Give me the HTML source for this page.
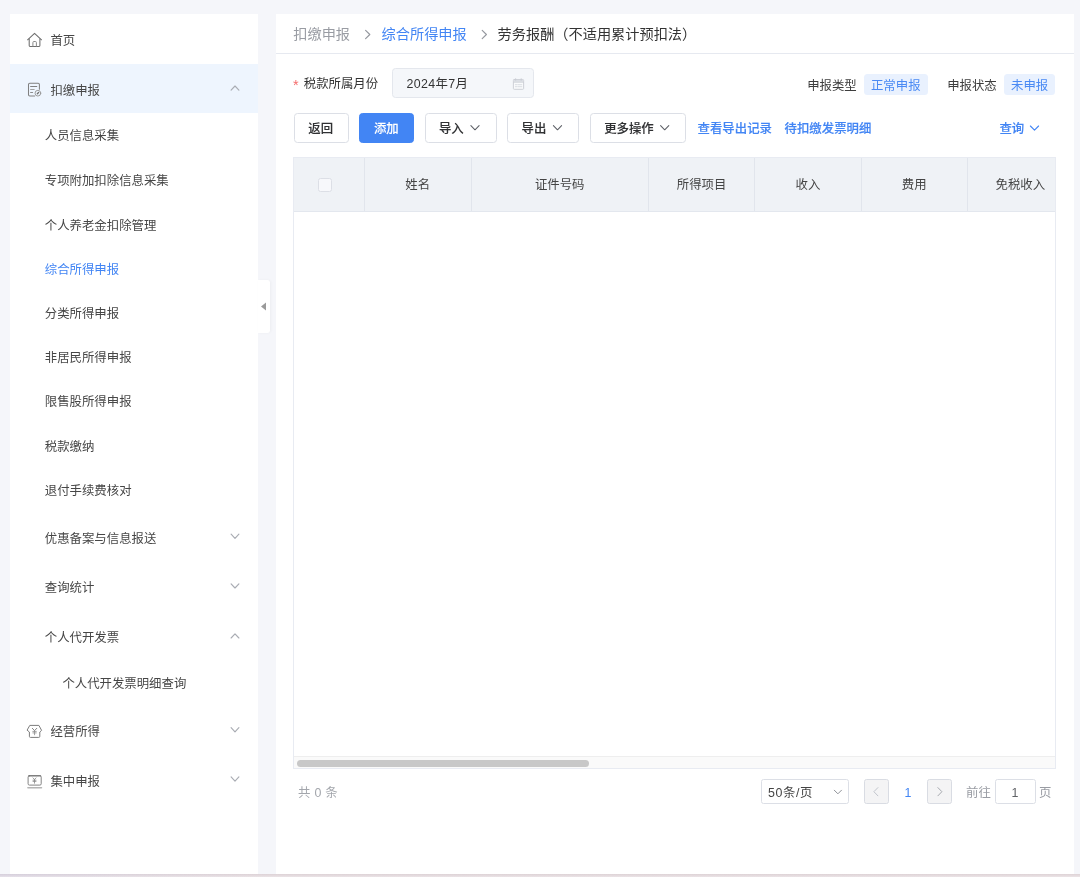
<!DOCTYPE html>
<html lang="zh-CN">
<head>
<meta charset="utf-8">
<title>劳务报酬(不适用累计预扣法)</title>
<style>
*{box-sizing:border-box;margin:0;padding:0}
html,body{width:1080px;height:877px;overflow:hidden}
body{background:#f5f6fa;font-family:"Liberation Sans","Noto Sans CJK SC",sans-serif;font-size:12.4px;color:#333;position:relative}
.abs{position:absolute}
svg{display:block;overflow:visible}
/* sidebar */
#side{position:absolute;left:10px;top:14px;width:248px;height:860px;background:#fff;will-change:transform}
.mi{height:49.6px;line-height:49.6px;padding-top:3px;padding-left:40.4px;color:#464646;font-size:12.4px;white-space:nowrap}
.mi.act{background:#eef5fe}
.mi.s1{padding-left:34.8px}
.si{height:44.3px;line-height:44.3px;padding-top:1.5px;padding-left:34.8px;color:#464646;font-size:12.4px;white-space:nowrap}
.si.on{color:#4285f4}
.si.l3{padding-left:52.4px}
/* handle */
#handle{position:absolute;left:258px;top:280px;width:12px;height:53px;background:#fff;border-radius:0 3px 3px 0;box-shadow:1px 0 3px rgba(0,0,0,.04)}
/* main */
#main{position:absolute;left:276px;top:14px;width:798px;height:860px;background:#fff;will-change:transform}
#bc{position:absolute;left:0;top:0;width:798px;height:39.8px;border-bottom:1px solid #e6e9f0;font-size:14.2px;line-height:41px;white-space:nowrap}
#bc span{position:absolute;top:0}
.t{position:absolute;white-space:nowrap;line-height:20px}
.btn{position:absolute;top:98.5px;height:30.2px;border:1px solid #dcdfe6;border-radius:3.5px;background:#fff;color:#303133;font-size:12.4px;line-height:30.6px;padding-left:13.8px;font-weight:500;-webkit-text-stroke:.1px;white-space:nowrap}
.btn.pri{background:#4285f4;border-color:#4285f4;color:#fff}
.link{position:absolute;top:105.2px;line-height:20px;color:#4285f4;font-size:12.4px;font-weight:500;-webkit-text-stroke:.15px;white-space:nowrap}
.tag{position:absolute;top:59.5px;height:21.4px;line-height:24px;background:#e9f1fe;color:#4a8af4;border-radius:3.5px;font-size:12.4px;text-align:center;white-space:nowrap}
#tbl{position:absolute;left:17.2px;top:142.8px;width:763px;height:612px;border:1px solid #e8ebf2;overflow:hidden;background:#fff}
#th{position:absolute;left:0;top:0;width:900px;height:54px;background:#eff2f6;border-bottom:1px solid #e3e7ee}
.th{position:absolute;top:0;height:53px;line-height:55px;text-align:center;border-right:1px solid #e1e5ec;color:#444;font-size:12.4px;white-space:nowrap}
#sb{position:absolute;left:0;bottom:0;width:100%;height:12px;background:#fafafa;border-top:1px solid #eeeeee}
#sb i{position:absolute;left:2.6px;top:2.8px;width:292px;height:7.4px;border-radius:4px;background:#c8c8c8}
.pg{position:absolute;top:765.3px;height:24.8px;border:1px solid #dcdfe6;border-radius:2.5px;background:#fff}
#ov{position:absolute;left:0;top:0;width:1080px;height:877px;pointer-events:none}
</style>
</head>
<body>
<div id="side">
  <div class="mi">首页</div>
  <div class="mi act">扣缴申报</div>
  <div class="si" style="padding-top:.6px">人员信息采集</div>
  <div class="si">专项附加扣除信息采集</div>
  <div class="si" style="padding-top:2.4px">个人养老金扣除管理</div>
  <div class="si on">综合所得申报</div>
  <div class="si">分类所得申报</div>
  <div class="si">非居民所得申报</div>
  <div class="si">限售股所得申报</div>
  <div class="si">税款缴纳</div>
  <div class="si">退付手续费核对</div>
  <div class="mi s1">优惠备案与信息报送</div>
  <div class="mi s1">查询统计</div>
  <div class="mi s1">个人代开发票</div>
  <div class="si l3">个人代开发票明细查询</div>
  <div class="mi" style="padding-left:40.4px">经营所得</div>
  <div class="mi" style="padding-left:40.4px">集中申报</div>
</div>
<div id="handle"></div>

<div id="main">
  <div id="bc">
    <span style="left:17.3px;color:#999ca3">扣缴申报</span>
    <span style="left:105.6px;color:#4285f4">综合所得申报</span>
    <span style="left:221.6px;color:#333">劳务报酬（不适用累计预扣法）</span>
  </div>

  <div class="t" style="left:17px;top:60.8px;color:#f56c6c;font-size:14.5px">*</div>
  <div class="t" style="left:27.8px;top:60.2px;color:#333">税款所属月份</div>
  <div class="abs" style="left:116.2px;top:54.3px;width:141.4px;height:29.7px;background:#f5f7fa;border:1px solid #e4e7ed;border-radius:3.5px"></div>
  <div class="t" style="left:130.6px;top:60.2px;color:#333;letter-spacing:.35px">2024年7月</div>

  <div class="t" style="left:531.2px;top:62px;color:#3d3d3d">申报类型</div>
  <div class="tag" style="left:588px;width:63.5px">正常申报</div>
  <div class="t" style="left:671.2px;top:62px;color:#3d3d3d">申报状态</div>
  <div class="tag" style="left:728px;width:51.3px">未申报</div>

  <div class="btn" style="left:17.5px;width:55.2px">返回</div>
  <div class="btn pri" style="left:83.1px;width:55px">添加</div>
  <div class="btn" style="left:148.8px;width:71.8px;padding-left:13.2px">导入</div>
  <div class="btn" style="left:231.2px;width:71.6px;padding-left:13.4px">导出</div>
  <div class="btn" style="left:314px;width:95.8px;padding-left:13.2px">更多操作</div>
  <div class="link" style="left:421.6px">查看导出记录</div>
  <div class="link" style="left:508.6px">待扣缴发票明细</div>
  <div class="link" style="left:723.4px">查询</div>

  <div id="tbl">
    <div id="th">
      <div class="th" style="left:0;width:70.6px"></div>
      <div class="th" style="left:70.6px;width:106.9px">姓名</div>
      <div class="th" style="left:177.5px;width:177.1px">证件号码</div>
      <div class="th" style="left:354.6px;width:106.5px">所得项目</div>
      <div class="th" style="left:461.1px;width:106.3px">收入</div>
      <div class="th" style="left:567.4px;width:106.2px">费用</div>
      <div class="th" style="left:673.6px;width:106.2px">免税收入</div>
    </div>
    <div id="sb"><i></i></div>
  </div>
  <div class="abs" style="left:42.4px;top:164.2px;width:13.8px;height:13.8px;border:1px solid #dcdfe6;border-radius:2.5px;background:#f7f8fb"></div>

  <div class="t" style="left:22px;top:768.8px;color:#a3a6ac;letter-spacing:.3px">共 0 条</div>
  <div class="pg" style="left:485px;width:88.4px"></div>
  <div class="t" style="left:492px;top:768.8px;color:#444;letter-spacing:.6px">50条/页</div>
  <div class="pg" style="left:588px;width:24.6px;background:#f4f4f5;border-color:#d9dce3"></div>
  <div class="t" style="left:628.4px;top:768.8px;color:#4285f4">1</div>
  <div class="pg" style="left:651.4px;width:24.8px;background:#f4f4f5;border-color:#d9dce3"></div>
  <div class="t" style="left:690px;top:768.8px;color:#999ca3">前往</div>
  <div class="pg" style="left:719.2px;width:40.4px"></div>
  <div class="t" style="left:735.6px;top:768.8px;color:#606266">1</div>
  <div class="t" style="left:763px;top:768.8px;color:#999ca3">页</div>
</div>
<div class="abs" style="left:0;top:874px;width:1080px;height:3px;background:linear-gradient(rgba(0,0,0,.025),rgba(255,255,255,.3)),linear-gradient(to right,#dad3e0 0,#dfd6de 12%,#e2d7db 25%,#e3d8db 100%)"></div>

<svg id="ov" viewBox="0 0 1080 877" fill="none" stroke-linecap="round" stroke-linejoin="round">
  <!-- home -->
  <g stroke="#6e6e6e" stroke-width="1.05">
    <path d="M27.6 39.8 L34.55 33.3 L41.5 39.8"/>
    <path d="M29.2 38.9 V45.6 Q29.2 46.4 30 46.4 H39.1 Q39.9 46.4 39.9 45.6 V38.9"/>
    <path d="M32.9 46.4 V42.5 Q32.9 41.5 33.9 41.5 H35.4 Q36.4 41.5 36.4 42.5 V46.4" stroke="#858585" stroke-width="0.95"/>
  </g>
  <!-- doc -->
  <g stroke="#808080" stroke-width="1.05">
    <path d="M39.4 89.2 V84.6 Q39.4 83.3 38.1 83.3 H29.8 Q28.5 83.3 28.5 84.6 V94.7 Q28.5 96 29.8 96 H34.6"/>
    <path d="M30.6 86.5 H36.8"/><path d="M30.6 89.5 H34.2" stroke="#a2a2a2"/><path d="M30.6 92.5 H32.6" stroke="#8a8a8a"/>
    <circle cx="37.9" cy="93.2" r="2.85" stroke="#979797" stroke-width="0.95"/>
    <path d="M37.3 93.8 L38.6 92.5" stroke="#6f6f6f" stroke-width="1.3"/>
  </g>
  <!-- shop -->
  <g stroke="#7c7c7c" stroke-width="1">
    <path d="M30.2 725.4 H38.9 L41.6 730.4 L39.8 732 V736.4 Q39.8 737.4 38.8 737.4 H30.4 Q29.4 737.4 29.4 736.4 V732 L27.4 730.4 Z"/>
    <path d="M32.3 728.3 L34.55 730.6 L36.8 728.3" stroke="#808080" stroke-width="0.95"/><path d="M34.55 730.6 V734.8 M32.8 731.4 H36.3 M32.8 732.9 H36.3" stroke="#8c8c8c" stroke-width="0.8"/>
  </g>
  <!-- laptop -->
  <g stroke="#848484" stroke-width="1">
    <rect x="28.1" y="775.8" width="13.1" height="9.3" rx="1.3"/>
    <path d="M28.6 775.8 H40.7" stroke="#6e6e6e"/>
    <path d="M27.9 787.7 H41.5" stroke="#b4b4b4" stroke-width="1.5"/>
    <path d="M33 777.9 L34.5 779.5 L36 777.9 M34.5 779.5 V783.2 M33 780.2 H36 M33 781.4 H36" stroke="#868686" stroke-width="0.8"/>
  </g>
  <!-- sidebar chevrons -->
  <g stroke="#a9acb3" stroke-width="1.15">
    <path d="M231.1 90.2 L235 86.0 L238.9 90.2"/>
    <path d="M231.1 534.2 L235 538.4 L238.9 534.2"/>
    <path d="M231.1 583.8 L235 588.0 L238.9 583.8"/>
    <path d="M231.1 638.0 L235 633.8 L238.9 638.0"/>
    <path d="M231.1 727.6 L235 731.8 L238.9 727.6"/>
    <path d="M231.1 776.9 L235 781.1 L238.9 776.9"/>
  </g>
  <!-- handle triangle -->
  <path d="M266 302.6 V310.6 L261 306.6 Z" fill="#9a9a9a" stroke="none"/>
  <!-- breadcrumb chevrons -->
  <g stroke="#94979e" stroke-width="1.15">
    <path d="M365.6 30.3 L369.8 34.5 L365.6 38.7"/>
    <path d="M482.2 30.3 L486.4 34.5 L482.2 38.7"/>
  </g>
  <!-- calendar -->
  <g stroke="#c8ccd3" stroke-width="0.9">
    <rect x="513.4" y="79.5" width="10.2" height="9.8" rx="0.8" fill="#fafbfc"/>
    <rect x="513.8" y="79.9" width="9.4" height="2.3" fill="#dcdfe5" stroke="none"/>
    <path d="M513.6 82.4 H523.4" stroke-width="0.6"/>
    <path d="M515.6 78.7 V80.2 M521.2 78.7 V80.2" stroke-width="0.9"/>
    <path d="M515.3 84.7 H517.2 M518.2 84.7 H521.8 M515.3 86.7 H517.2 M518.2 86.7 H521.8" stroke="#d0d3da" stroke-width="0.75"/>
  </g>
  <!-- button chevrons -->
  <g stroke="#5c5f65" stroke-width="1.05">
    <path d="M470.9 125.6 L475 129.8 L479.1 125.6"/>
    <path d="M553.4 125.6 L557.5 129.8 L561.6 125.6"/>
    <path d="M660.6 125.6 L664.7 129.8 L668.8 125.6"/>
  </g>
  <path d="M1030.4 126 L1034.5 130.2 L1038.6 126" stroke="#4285f4" stroke-width="1.1"/>
  <!-- pagination -->
  <path d="M834.3 790.2 L837.9 793.8 L841.5 790.2" stroke="#8e9197" stroke-width="1"/>
  <path d="M877.9 787.6 L873.9 791.7 L877.9 795.8" stroke="#c0c4cc" stroke-width="1"/>
  <path d="M937.9 787.6 L941.9 791.7 L937.9 795.8" stroke="#a5a8ae" stroke-width="1"/>
</svg>
</body>
</html>
